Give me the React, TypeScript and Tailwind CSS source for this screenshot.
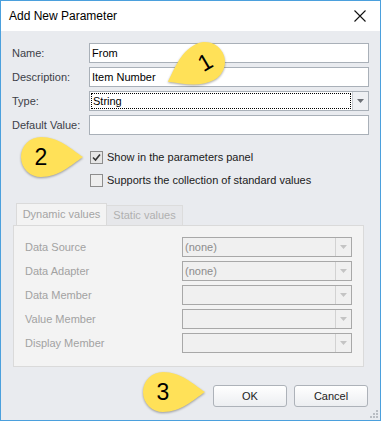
import * as React from 'react';

const font = { fontFamily: '"Liberation Sans", Arial, sans-serif' };

const Caret: React.FC<{ color?: string }> = ({ color = '#6b6f75' }) => (
  <svg width="7" height="4" viewBox="0 0 7 4">
    <path d="M0 0 H7 L3.5 4 Z" fill={color} />
  </svg>
);

// teardrop pointing right, tip at (64,21)
const Callout: React.FC<{ label: string; className: string; rotate?: number; textRotate?: number }> = ({
  label,
  className,
  rotate = 0,
  textRotate = 0,
}) => (
  <div className={`absolute ${className}`}>
    <svg width="68" height="46" viewBox="0 0 68 46" className="overflow-visible drop-shadow-[0_1px_1px_rgba(0,0,0,0.35)]">
      <path
        transform={`rotate(${rotate} 22 22)`}
        d="M64 22 C52 14 40 2 22 2 A20 20 0 0 0 22 42 C40 42 52 30 64 22 Z"
        fill="#ffe158"
      />
    </svg>
    <span
      className="absolute left-[2px] top-[2px] w-[40px] h-[40px] flex items-center justify-center text-[23px] text-black"
      style={{ ...font, transform: `rotate(${textRotate}deg)` }}
    >
      {label}
    </span>
  </div>
);

const TextRow: React.FC<{ label: string; value?: string }> = ({ label, value }) => (
  <div className="flex items-center h-[20px]">
    <div className="w-[77px] text-[11px] text-[#3c4048]">{label}</div>
    <div className="flex-1 h-[20px] border border-[#a9b0b8] bg-white flex items-center px-[2px] text-[11px] text-black">
      {value}
    </div>
  </div>
);

const DisabledCombo: React.FC<{ label: string; value?: string }> = ({ label, value }) => (
  <div className="flex items-center h-[20px]">
    <div className="w-[157px] text-[11px] text-[#a2a2a2]">{label}</div>
    <div className="w-[170px] h-[20px] border border-[#a8a8a8] bg-[#f0f0f0] flex">
      <div className="flex-1 flex items-center px-[2px] text-[11px] text-[#8c8c8c]">{value}</div>
      <div className="w-[16px] border-l border-[#d2d2d2] flex items-center justify-center">
        <Caret color="#c4c4c4" />
      </div>
    </div>
  </div>
);

const Check: React.FC<{ checked?: boolean; label: string }> = ({ checked, label }) => (
  <div className="flex items-center h-[23px]">
    <div
      className={`w-[13px] h-[13px] border border-[#8d8d8d] flex items-center justify-center ${
        checked ? 'bg-[#e6e6e6]' : 'bg-[#eeeeee]'
      }`}
    >
      {checked && (
        <svg width="9" height="9" viewBox="0 0 9 9">
          <path d="M1 4.5 L3.5 7 L8 1.5" stroke="#333" strokeWidth="1.6" fill="none" />
        </svg>
      )}
    </div>
    <span className="ml-[4px] text-[11px] text-[#202020]">{label}</span>
  </div>
);

const App: React.FC = () => {
  return (
    <div className="w-[381px] h-[421px] relative" style={font}>
      <div className="w-full h-full border border-[#4ba0dd] flex flex-col bg-[#e9ebef]">
        {/* title bar */}
        <div className="h-[30px] bg-white flex items-center justify-between pl-[8px] pr-[14px] shrink-0">
          <span className="text-[12px] text-black">Add New Parameter</span>
          <svg width="12" height="12" viewBox="0 0 12 12">
            <path d="M0.5 0.5 L11.5 11.5 M11.5 0.5 L0.5 11.5" stroke="#111" strokeWidth="1.1" />
          </svg>
        </div>

        <div className="flex-1 flex flex-col pl-[11px] pr-[11px] pt-[12px]">
          <div className="flex flex-col gap-[4px]">
            <TextRow label="Name:" value="From" />
            <TextRow label="Description:" value="Item Number" />
            <div className="flex items-center h-[20px]">
              <div className="w-[77px] text-[11px] text-[#3c4048]">Type:</div>
              <div className="flex-1 h-[20px] border border-[#a9b0b8] bg-white flex">
                <div className="flex-1 p-[1px]">
                  <div className="h-full border border-dotted border-black flex items-center px-[1px] text-[11px] text-black">
                    String
                  </div>
                </div>
                <div className="w-[16px] border-l border-[#c8ccd2] bg-[#eef0f3] flex items-center justify-center">
                  <Caret />
                </div>
              </div>
            </div>
            <TextRow label="Default Value:" />
          </div>

          <div className="flex flex-col pl-[78px] mt-[11px]">
            <Check checked label="Show in the parameters panel" />
            <Check label="Supports the collection of standard values" />
          </div>

          <div className="mt-[11px] ml-[1px] w-[351px] flex flex-col">
            <div className="flex items-end h-[22px] pl-[3px]">
              <div className="h-[22px] w-[91px] border border-b-0 border-[#dadada] bg-[#f3f3f3] flex items-center justify-center text-[11px] text-[#a4a4a4]">
                Dynamic values
              </div>
              <div className="h-[20px] w-[76px] border border-l-0 border-b-0 border-[#dcdcdc] bg-[#e6e7ea] flex items-center justify-center text-[11px] text-[#b0b0b0]">
                Static values
              </div>
            </div>
            <div className="h-[142px] border border-[#dadada] bg-[#f3f3f3] pl-[11px] pt-[11px] flex flex-col gap-[4px]">
              <DisabledCombo label="Data Source" value="(none)" />
              <DisabledCombo label="Data Adapter" value="(none)" />
              <DisabledCombo label="Data Member" />
              <DisabledCombo label="Value Member" />
              <DisabledCombo label="Display Member" />
            </div>
          </div>

          <div className="flex justify-end gap-[7px] mt-[18px] pr-[1px]">
            <button className="w-[74px] h-[22px] rounded-[3px] border border-[#adb2b9] bg-gradient-to-b from-white to-[#eceef1] text-[11px] text-[#222]">
              OK
            </button>
            <button className="w-[74px] h-[22px] rounded-[3px] border border-[#adb2b9] bg-gradient-to-b from-white to-[#eceef1] text-[11px] text-[#222]">
              Cancel
            </button>
          </div>
        </div>
      </div>

      {/* size grip */}
      <svg className="absolute right-[3px] bottom-[3px]" width="8" height="8" viewBox="0 0 8 8">
        {[
          [6, 0],
          [3, 3],
          [6, 3],
          [0, 6],
          [3, 6],
          [6, 6],
        ].map(([x, y], i) => (
          <rect key={i} x={x} y={y} width="2" height="2" fill="#b9bdc3" />
        ))}
      </svg>

      <Callout label="1" className="left-[183px] top-[40px]" rotate={152} textRotate={-30} />
      <Callout label="2" className="left-[19px] top-[135px]" />
      <Callout label="3" className="left-[141px] top-[370px]" />
    </div>
  );
};

export default App;
